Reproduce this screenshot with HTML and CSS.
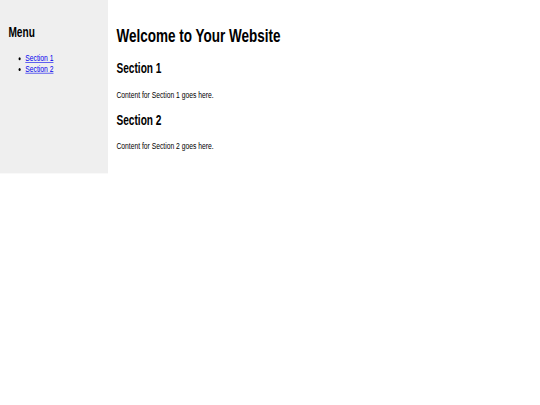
FILE: index.html
```html
<!DOCTYPE html>
<html>
<head>
<meta charset="utf-8">
<title>Welcome</title>
<link rel="stylesheet" href="styles.css">
</head>
<body>
<div class="viewport">
  <div class="page">
    <div class="container">
      <nav class="sidebar">
        <h2>Menu</h2>
        <ul>
          <li><a href="#section1">Section 1</a></li>
          <li><a href="#section2">Section 2</a></li>
        </ul>
      </nav>
      <main class="content">
        <h1>Welcome to Your Website</h1>
        <section id="section1">
          <h2>Section 1</h2>
          <p>Content for Section 1 goes here.</p>
        </section>
        <section id="section2">
          <h2>Section 2</h2>
          <p>Content for Section 2 goes here.</p>
        </section>
      </main>
    </div>
  </div>
</div>
</body>
</html>
```

FILE: styles.css
```css
html, body {
  margin: 0;
  padding: 0;
  background: #ffffff;
  overflow: hidden;
}
.viewport {
  width: 540px;
  height: 405px;
  overflow: hidden;
}
.page {
  width: 1280px;
  height: 672px;
  transform: scale(0.421875, 0.602);
  transform-origin: 0 0;
  font-family: "Liberation Sans", Arial, sans-serif;
  font-size: 16px;
  color: #000;
}
.container {
  display: flex;
}
.sidebar {
  box-sizing: border-box;
  width: 20%;
  flex: 0 0 20%;
  padding: 20px;
  background: #efefef;
}
.content {
  flex: 1;
  padding: 20px;
}
a {
  color: #0000ee;
}
```
